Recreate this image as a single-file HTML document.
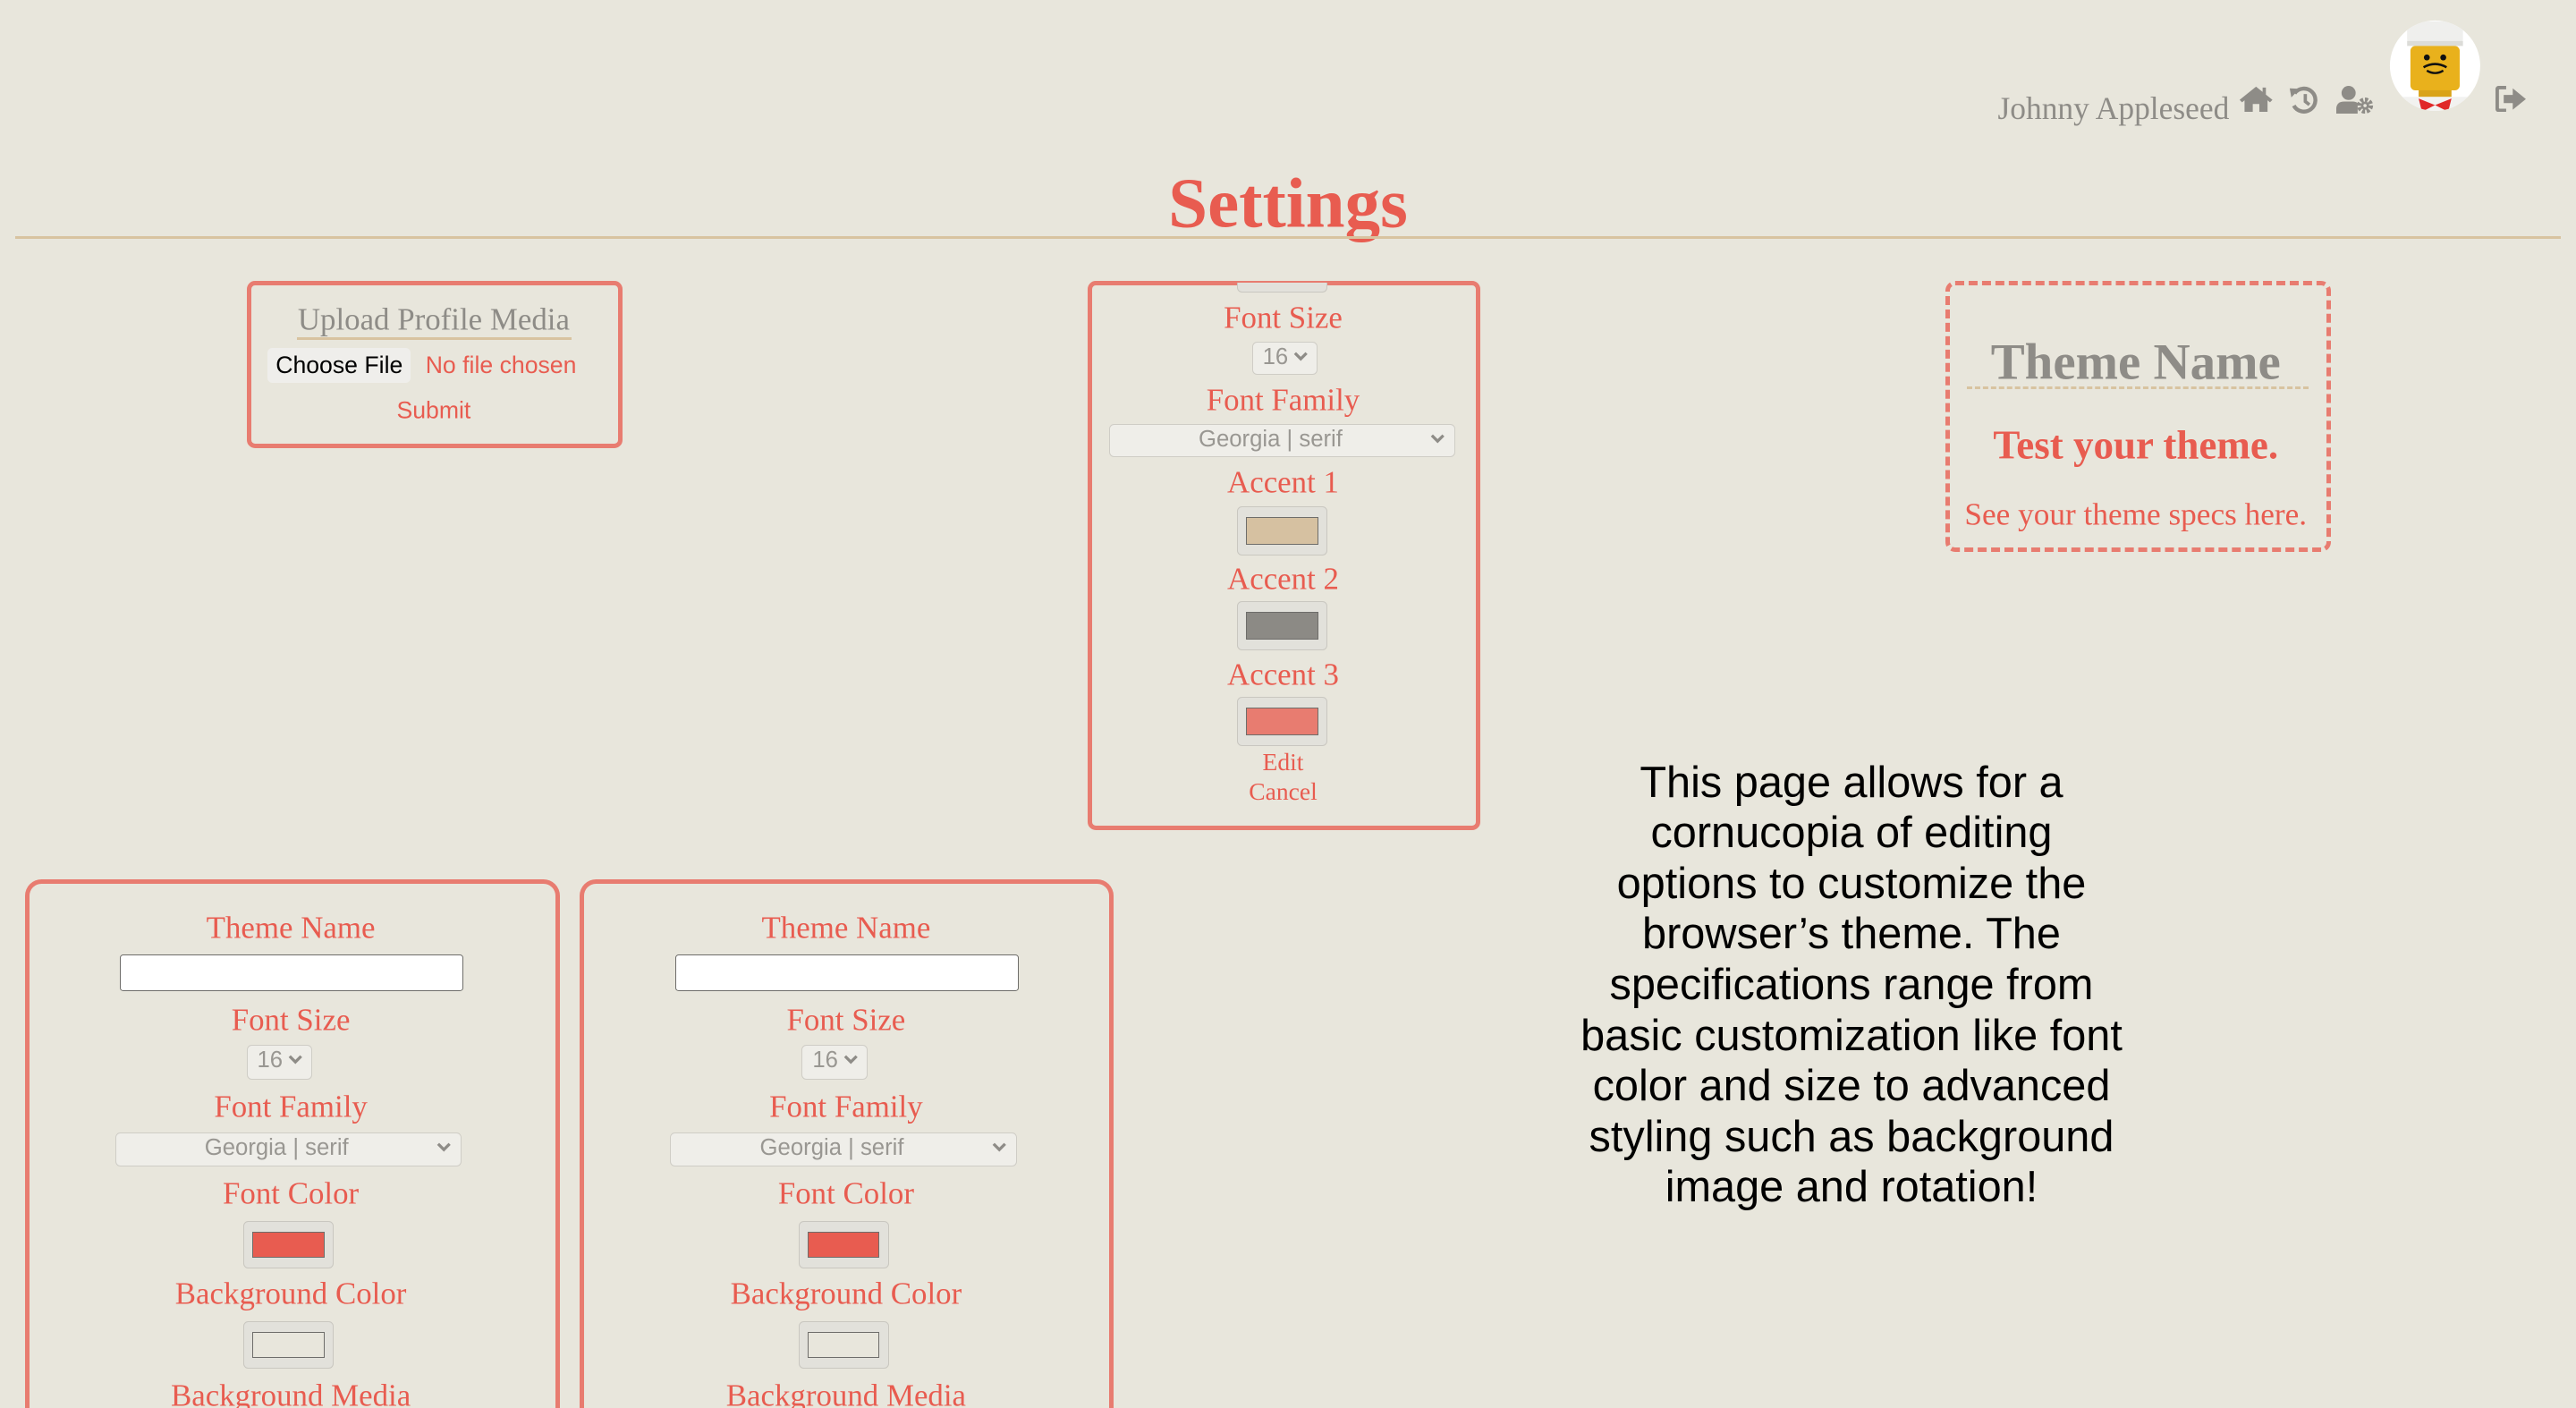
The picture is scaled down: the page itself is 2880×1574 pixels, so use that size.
<!DOCTYPE html>
<html><head><meta charset="utf-8">
<style>
html,body{margin:0;padding:0;background:#e8e6dc;overflow:hidden}
body{width:2880px;height:1574px}
#w{position:absolute;left:0;top:0;width:1568px;height:857px;overflow:hidden;zoom:1.836735;font-family:"Liberation Serif",serif}
.a{position:absolute}
.t{position:absolute;white-space:nowrap;transform:translate(-50%,-50%);color:#e85c50;font-size:19px;line-height:1}
.box{position:absolute;border:3px solid #e87c70;border-radius:5px;box-sizing:border-box}
.sel{position:absolute;box-sizing:border-box;border:1px solid #cfcdc6;border-radius:3px;background:#efeee9;color:#999792;font-family:"Liberation Sans",sans-serif;font-size:14px;line-height:18px}
.sel .v{position:absolute;top:0}
.sel svg{position:absolute;top:5px}
.col{position:absolute;box-sizing:border-box;border:1px solid #c9c7c0;border-radius:3px;background:#e2e1db}
.col i{position:absolute;left:5px;top:6px;right:5px;bottom:6px;border:1px solid #6e6d6a}
.sans{font-family:"Liberation Sans",sans-serif}
</style></head><body><div id="w">

<!-- header -->
<div class="a" style="left:1216px;top:55px;font-size:19.3px;color:#8e8c87;line-height:22px">Johnny Appleseed</div>
<svg class="a" style="left:1363px;top:52px" width="21" height="16" viewBox="0 0 21 16"><path d="M10.5 0.5 L0.5 8.5 L2 10 L3.5 8.8 V16 H8.5 V11 H12.5 V16 H17.5 V8.8 L19 10 L20.5 8.5 L16.5 5.3 V1 H14.5 V3.7 Z" fill="#8e8c87"/></svg>
<svg class="a" style="left:1393px;top:52px" width="18" height="17" viewBox="0 0 18 17"><path d="M3.5 4.5 A7 7 0 1 1 3 12" fill="none" stroke="#8e8c87" stroke-width="2.4"/><path d="M0.5 1.5 L6.5 1.8 L1.5 7 Z" fill="#8e8c87"/><path d="M10 5 V9.5 L12.5 11.5" fill="none" stroke="#8e8c87" stroke-width="2"/></svg>
<svg class="a" style="left:1422px;top:52px" width="23" height="17" viewBox="0 0 23 17"><circle cx="7.5" cy="4.3" r="4.3" fill="#8e8c87"/><path d="M0 17 V14 Q0 9.5 5 9.5 H10 Q12 9.5 13 10.5 V17 Z" fill="#8e8c87"/><circle cx="17.5" cy="12" r="3.6" fill="none" stroke="#8e8c87" stroke-width="2.6" stroke-dasharray="1.8 1"/><circle cx="17.5" cy="12" r="2.5" fill="#8e8c87"/><circle cx="17.5" cy="12" r="1" fill="#e8e6dc"/></svg>
<svg class="a" style="left:1454px;top:12px" width="56" height="56" viewBox="0 0 56 56">
<defs><clipPath id="c"><circle cx="28" cy="28" r="27.5"/></clipPath></defs>
<circle cx="28" cy="28" r="27.5" fill="#fff"/>
<g clip-path="url(#c)">
<rect x="11" y="1" width="34" height="15" rx="4" fill="#efefed"/>
<rect x="11" y="13" width="34" height="3" fill="#dcdcd8"/>
<rect x="13" y="16" width="30" height="27" rx="3" fill="#e9b11c"/>
<rect x="18" y="43" width="20" height="4" fill="#d9a318"/>
<rect x="8" y="47" width="40" height="10" fill="#f2f2f0"/>
<path d="M18 48 L28 52 L38 48 L36 56 L28 52 L20 56 Z" fill="#e02828"/>
<circle cx="23" cy="23" r="1.8" fill="#111"/><circle cx="33" cy="23" r="1.8" fill="#111"/>
<path d="M21 29 Q28 25 35 29" stroke="#111" stroke-width="1.4" fill="none"/>
<path d="M23 31 Q28 34 33 31" stroke="#111" stroke-width="1.3" fill="none"/>
</g></svg>
<svg class="a" style="left:1519px;top:52px" width="19" height="16" viewBox="0 0 19 16"><path d="M6.5 1 H2.5 Q1 1 1 2.5 V13.5 Q1 15 2.5 15 H6.5" fill="none" stroke="#8e8c87" stroke-width="2.2"/><path d="M5 5.5 H10.5 V1.5 L18.5 8 L10.5 14.5 V10.5 H5 Z" fill="#8e8c87"/></svg>

<div class="t" style="left:784px;top:124px;font-size:43px;font-weight:bold;">Settings</div>
<div class="a" style="left:9px;top:143.5px;width:1550px;height:2px;background:#d8c3a0"></div>

<!-- upload box -->
<div class="box" style="left:150px;top:171px;width:229px;height:102px"></div>
<div class="t" style="left:264px;top:195px;color:#8e8c87;font-size:19px">Upload Profile Media</div>
<div class="a" style="left:181px;top:205px;width:167px;height:2px;background:#d8c3a0"></div>
<div class="a sans" style="left:163px;top:212px;width:87px;height:21px;background:#efeeeb;border-radius:3px;font-size:14.5px;line-height:21px;text-align:center;color:#000">Choose File</div>
<div class="a sans" style="left:259px;top:212px;font-size:14.5px;line-height:21px;color:#e85c50">No file chosen</div>
<div class="t sans" style="left:264px;top:250px;font-size:14.5px">Submit</div>

<!-- middle box -->
<div class="box" style="left:662px;top:171px;width:239px;height:334px"></div>
<div class="a" style="left:753px;top:172px;width:55px;height:6px;border:1px solid #c9c7c0;border-top:none;border-radius:0 0 3px 3px;background:#e2e1db;box-sizing:border-box"></div>
<div class="t" style="left:781px;top:194px">Font Size</div>
<div class="sel" style="left:762px;top:208px;width:40px;height:20px"><span class="v" style="left:6px">16</span><svg style="left:25px" width="9" height="7" viewBox="0 0 9 7"><path d="M1 1.5 L4.5 5 L8 1.5" stroke="#8e8c87" stroke-width="1.8" fill="none"/></svg></div>
<div class="t" style="left:781px;top:244px">Font Family</div>
<div class="sel" style="left:675px;top:258px;width:211px;height:20px"><span class="v" style="left:54px">Georgia | serif</span><svg style="left:195px" width="9" height="7" viewBox="0 0 9 7"><path d="M1 1.5 L4.5 5 L8 1.5" stroke="#8e8c87" stroke-width="1.8" fill="none"/></svg></div>
<div class="t" style="left:781px;top:294px">Accent 1</div>
<div class="col" style="left:753px;top:308px;width:55px;height:30px"><i style="background:#d6c1a1"></i></div>
<div class="t" style="left:781px;top:353px">Accent 2</div>
<div class="col" style="left:753px;top:366px;width:55px;height:30px"><i style="background:#8c8a85"></i></div>
<div class="t" style="left:781px;top:411px">Accent 3</div>
<div class="col" style="left:753px;top:424px;width:55px;height:30px"><i style="background:#e87c70"></i></div>
<div class="t" style="left:781px;top:464px;font-size:15px">Edit</div>
<div class="t" style="left:781px;top:482px;font-size:15px">Cancel</div>

<!-- right preview box -->
<div class="a" style="left:1184px;top:171px;width:235px;height:165px;border:3px dashed #e87c70;border-radius:6px;box-sizing:border-box"></div>
<div class="t" style="left:1300px;top:221px;font-size:31px;font-weight:bold;color:#8e8c87">Theme Name</div>
<div class="a" style="left:1197px;top:235px;width:208px;height:0;border-top:2px dashed #d8c3a0"></div>
<div class="t" style="left:1300px;top:271px;font-size:24.5px;font-weight:bold">Test your theme.</div>
<div class="t" style="left:1300px;top:313px;font-size:19.2px">See your theme specs here.</div>

<!-- paragraph -->
<div class="a sans" style="left:907px;top:461px;width:440px;text-align:center;font-size:26.5px;line-height:30.8px;color:#000">This page allows for a<br>cornucopia of editing<br>options to customize the<br>browser’s theme. The<br>specifications range from<br>basic customization like font<br>color and size to advanced<br>styling such as background<br>image and rotation!</div>

<!-- bottom boxes -->
<div class="box" style="left:15px;top:535px;width:326px;height:322px;border-radius:10px 10px 0 0;border-bottom:none"></div>
<div class="box" style="left:353px;top:535px;width:325px;height:322px;border-radius:10px 10px 0 0;border-bottom:none"></div>

<div class="t" style="left:177px;top:565px">Theme Name</div>
<div class="a" style="left:73px;top:581px;width:209px;height:22px;background:#fff;border:1px solid #6e6d6a;border-radius:2px;box-sizing:border-box"></div>
<div class="t" style="left:177px;top:621px">Font Size</div>
<div class="sel" style="left:150px;top:636px;width:40px;height:21px"><span class="v" style="left:6px">16</span><svg style="left:25px" width="9" height="7" viewBox="0 0 9 7"><path d="M1 1.5 L4.5 5 L8 1.5" stroke="#8e8c87" stroke-width="1.8" fill="none"/></svg></div>
<div class="t" style="left:177px;top:674px">Font Family</div>
<div class="sel" style="left:70px;top:689px;width:211px;height:21px"><span class="v" style="left:54px">Georgia | serif</span><svg style="left:195px" width="9" height="7" viewBox="0 0 9 7"><path d="M1 1.5 L4.5 5 L8 1.5" stroke="#8e8c87" stroke-width="1.8" fill="none"/></svg></div>
<div class="t" style="left:177px;top:727px">Font Color</div>
<div class="col" style="left:148px;top:743px;width:55px;height:29px"><i style="background:#e85c50"></i></div>
<div class="t" style="left:177px;top:788px">Background Color</div>
<div class="col" style="left:148px;top:804px;width:55px;height:29px"><i style="background:#e8e6dc"></i></div>
<div class="a" style="left:0;top:838px;width:356px;height:19px;overflow:hidden"><div class="t" style="left:177px;top:12px">Background Media</div></div>

<div class="t" style="left:515px;top:565px">Theme Name</div>
<div class="a" style="left:411px;top:581px;width:209px;height:22px;background:#fff;border:1px solid #6e6d6a;border-radius:2px;box-sizing:border-box"></div>
<div class="t" style="left:515px;top:621px">Font Size</div>
<div class="sel" style="left:488px;top:636px;width:40px;height:21px"><span class="v" style="left:6px">16</span><svg style="left:25px" width="9" height="7" viewBox="0 0 9 7"><path d="M1 1.5 L4.5 5 L8 1.5" stroke="#8e8c87" stroke-width="1.8" fill="none"/></svg></div>
<div class="t" style="left:515px;top:674px">Font Family</div>
<div class="sel" style="left:408px;top:689px;width:211px;height:21px"><span class="v" style="left:54px">Georgia | serif</span><svg style="left:195px" width="9" height="7" viewBox="0 0 9 7"><path d="M1 1.5 L4.5 5 L8 1.5" stroke="#8e8c87" stroke-width="1.8" fill="none"/></svg></div>
<div class="t" style="left:515px;top:727px">Font Color</div>
<div class="col" style="left:486px;top:743px;width:55px;height:29px"><i style="background:#e85c50"></i></div>
<div class="t" style="left:515px;top:788px">Background Color</div>
<div class="col" style="left:486px;top:804px;width:55px;height:29px"><i style="background:#e8e6dc"></i></div>
<div class="a" style="left:356px;top:838px;width:320px;height:19px;overflow:hidden"><div class="t" style="left:159px;top:12px">Background Media</div></div>

</div></body></html>
